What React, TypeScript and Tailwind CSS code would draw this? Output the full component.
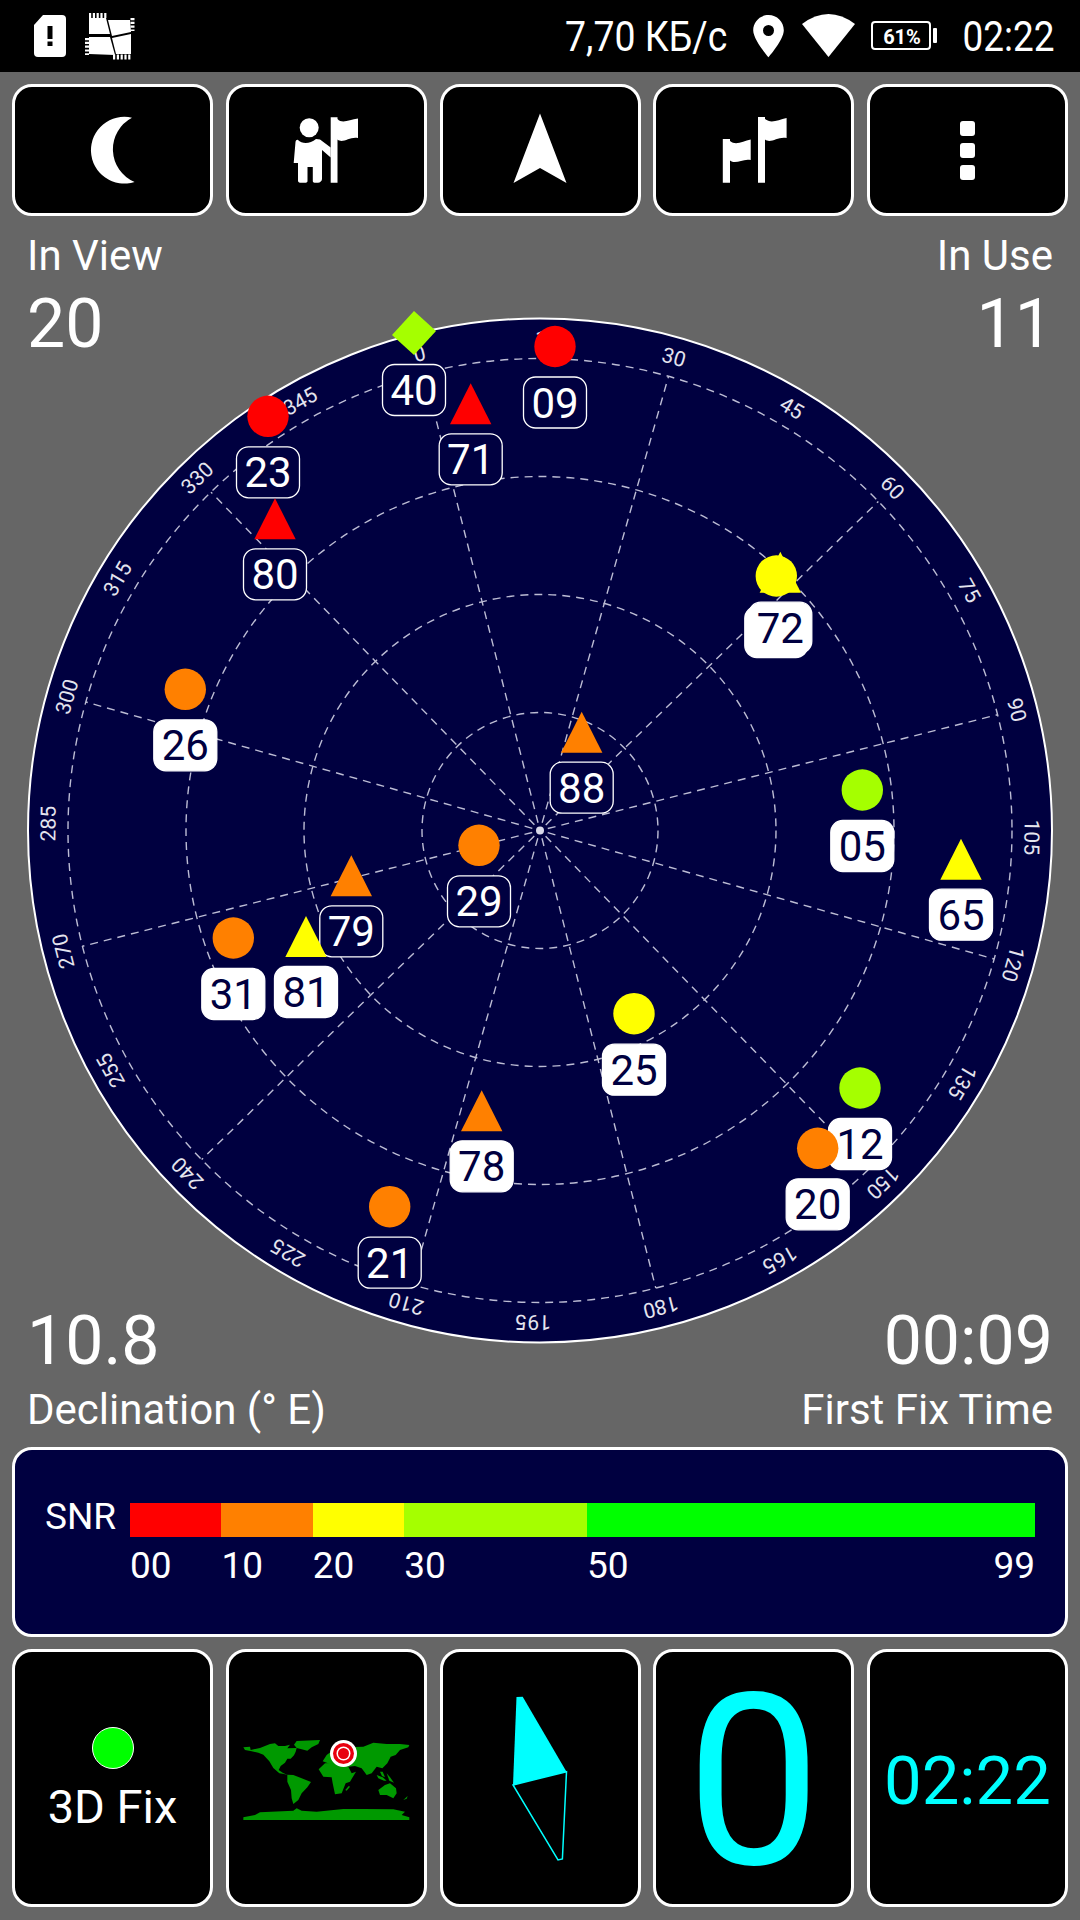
import React from "react";

const NAVY = "#000040";
const CX = 540;
const CY = 830.5;
const ROT = -14.2;

type Sat = {
  n: string;
  x: number;
  y: number;
  shape: "c" | "t" | "d";
  color: string;
  filled: boolean;
  noGlyph?: boolean;
  noPill?: boolean;
  noText?: boolean;
};

const RED = "#ff0000";
const ORANGE = "#ff8000";
const YELLOW = "#ffff00";
const LIME = "#a5ff00";

const sats: Sat[] = [
  { n: "40", x: 414, y: 333, shape: "d", color: LIME, filled: false },
  { n: "09", x: 555, y: 346.5, shape: "c", color: RED, filled: false },
  { n: "71", x: 470.7, y: 383.3, shape: "t", color: RED, filled: false },
  { n: "23", x: 268, y: 416.3, shape: "c", color: RED, filled: false },
  { n: "80", x: 275, y: 498.3, shape: "t", color: RED, filled: false },
  { n: "26", x: 185.3, y: 689.3, shape: "c", color: ORANGE, filled: true },
  { n: "72", x: 780.3, y: 551.7, shape: "t", color: YELLOW, filled: true, noPill: true, noText: true },
  { n: "72", x: 776.3, y: 576, shape: "c", color: YELLOW, filled: true, noText: true },
  { n: "72", x: 780.3, y: 551.7, shape: "t", color: YELLOW, filled: true, noGlyph: true },
  { n: "88", x: 581.7, y: 711.7, shape: "t", color: ORANGE, filled: false },
  { n: "05", x: 862.3, y: 790, shape: "c", color: LIME, filled: true },
  { n: "65", x: 961, y: 838.7, shape: "t", color: YELLOW, filled: true },
  { n: "29", x: 479, y: 845.3, shape: "c", color: ORANGE, filled: false },
  { n: "79", x: 351.3, y: 855.3, shape: "t", color: ORANGE, filled: false },
  { n: "81", x: 306, y: 916, shape: "t", color: YELLOW, filled: true },
  { n: "31", x: 233.3, y: 938, shape: "c", color: ORANGE, filled: true },
  { n: "25", x: 634, y: 1013.7, shape: "c", color: YELLOW, filled: true },
  { n: "78", x: 481.7, y: 1090.3, shape: "t", color: ORANGE, filled: true },
  { n: "12", x: 860, y: 1088, shape: "c", color: LIME, filled: true },
  { n: "20", x: 817.7, y: 1148.3, shape: "c", color: ORANGE, filled: true },
  { n: "21", x: 389.7, y: 1206.7, shape: "c", color: ORANGE, filled: false },
];

function Marker({ s }: { s: Sat }) {
  let pillCenter = s.y + 56;
  let glyph: React.ReactNode = null;
  if (s.shape === "c") {
    glyph = <circle cx={s.x} cy={s.y} r={20.7} fill={s.color} />;
  } else if (s.shape === "t") {
    pillCenter = s.y + 76;
    glyph = <polygon points={`${s.x},${s.y} ${s.x + 20.7},${s.y + 41} ${s.x - 20.7},${s.y + 41}`} fill={s.color} />;
  } else {
    pillCenter = s.y + 57;
    glyph = <polygon points={`${s.x},${s.y - 22} ${s.x + 22},${s.y - 2} ${s.x},${s.y + 22} ${s.x - 22},${s.y + 2}`} fill={s.color} />;
  }
  return (
    <g>
      {!s.noPill && (
        <rect
          x={s.x - 31.5}
          y={pillCenter - 25.5}
          width={63}
          height={51}
          rx={12}
          fill={s.filled ? "#ffffff" : NAVY}
          stroke="#ffffff"
          strokeWidth={1.3}
        />
      )}
      {!s.noText && (
        <text x={s.x} y={pillCenter + 15} textAnchor="middle" fontSize={42} fill={s.filled ? NAVY : "#ffffff"}>
          {s.n}
        </text>
      )}
      {!s.noGlyph && glyph}
    </g>
  );
}

function SkyPlot() {
  const spokes = Array.from({ length: 12 }, (_, i) => i * 30);
  const labels = Array.from({ length: 24 }, (_, i) => i * 15);
  return (
    <svg
      className="col-start-1 row-start-1 mt-[84px] self-start"
      width={1080}
      height={1060}
      viewBox="0 300 1080 1060"
    >
      <circle cx={CX} cy={CY} r={512} fill={NAVY} stroke="#ffffff" strokeWidth={2} />
      {[118, 236, 354, 472].map((r) => (
        <circle key={r} cx={CX} cy={CY} r={r} fill="none" stroke="#bcbcd4" strokeWidth={1.4} strokeDasharray="8 6" />
      ))}
      {spokes.map((a) => {
        const t = ((a + ROT) * Math.PI) / 180;
        return (
          <line
            key={a}
            x1={CX + 8 * Math.sin(t)}
            y1={CY - 8 * Math.cos(t)}
            x2={CX + 472 * Math.sin(t)}
            y2={CY - 472 * Math.cos(t)}
            stroke="#bcbcd4"
            strokeWidth={1.4}
            strokeDasharray="8 6"
          />
        );
      })}
      <circle cx={CX} cy={CY} r={4} fill="#d8d8e8" />
      {labels.map((a) => {
        const deg = a + ROT;
        const t = (deg * Math.PI) / 180;
        const x = CX + 492 * Math.sin(t);
        const y = CY - 492 * Math.cos(t);
        return (
          <text
            key={a}
            x={x}
            y={y + 7.5}
            textAnchor="middle"
            fontSize={21}
            fill="#e4e4ee"
            transform={`rotate(${deg} ${x} ${y})`}
          >
            {a}
          </text>
        );
      })}
      {sats.map((s, i) => (
        <Marker key={i} s={s} />
      ))}
    </svg>
  );
}

function StatusBar() {
  return (
    <div className="flex h-[72px] items-center bg-black text-white">
      <svg width={140} height={72} viewBox="0 0 140 72" className="shrink-0">
        <path d="M43 15H62a4 4 0 0 1 4 4V53a4 4 0 0 1-4 4H38a4 4 0 0 1-4-4V25Z" fill="#fff" />
        <rect x={47.5} y={26} width={5} height={13} fill="#000" />
        <rect x={47.5} y={41.5} width={5} height={4.5} fill="#000" />
        <g fill="#fff">
          <polygon points="89,18 106,18 110,34 89,34" />
          <polygon points="108,20 130,20 131,32 112,36" />
          <polygon points="89,37 110,37 115,55 89,54" />
          <polygon points="112,38 131,34 131,54 116,54" />
        </g>
        <g stroke="#fff" strokeWidth={5} strokeDasharray="2.2 1.6" fill="none">
          <line x1={89} y1={15.5} x2={108} y2={15.5} />
          <line x1={113} y1={57} x2={131} y2={57} />
        </g>
        <g stroke="#fff" strokeWidth={4} strokeDasharray="2.2 1.6" fill="none">
          <line x1={87} y1={38} x2={87} y2={55} />
          <line x1={132.5} y1={18} x2={132.5} y2={31} />
        </g>
      </svg>
      <div className="ml-[-140px] flex w-full items-center justify-end pr-[25px]">
        <span className="flex w-[162px] justify-end pt-[2px]">
          <span className="inline-block shrink-0 origin-right scale-x-[.89] whitespace-nowrap text-[42px] leading-[50px]">
            7,70 КБ/с
          </span>
        </span>
        <svg width={31} height={44} viewBox="754 14 31 44" className="ml-[26px] shrink-0">
          <path fillRule="evenodd" d="M769.5 15c-8.5 0-15.3 6.8-15.3 15.2 0 9.5 15.3 27 15.3 27s15.3-17.5 15.3-27c0-8.4-6.8-15.2-15.3-15.2Zm0 10a5.5 5.5 0 1 1 0 11 5.5 5.5 0 0 1 0-11Z" fill="#fff" />
        </svg>
        <svg width={54} height={44} viewBox="803 14 54 44" className="ml-[18px] shrink-0">
          <path d="M829.5 57L803 24Q829.5 4 856 24Z" fill="#fff" />
        </svg>
        <svg width={67} height={44} viewBox="872 14 67 44" className="ml-[15px] shrink-0">
          <rect x={873} y={22} width={58} height={27} rx={3} fill="none" stroke="#fff" strokeWidth={2} />
          <rect x={934} y={28} width={4} height={15} rx={1} fill="#fff" />
          <text x={903} y={43.5} textAnchor="middle" fontSize={20} fontWeight={700} fill="#fff">
            61%
          </text>
        </svg>
        <span className="ml-[25px] flex w-[92px] justify-end pt-[2px]">
          <span className="inline-block shrink-0 origin-right scale-x-[.88] whitespace-nowrap text-[42px] leading-[50px]">
            02:22
          </span>
        </span>
      </div>
    </div>
  );
}

function Btn({ children }: { children: React.ReactNode }) {
  return (
    <div className="flex h-[132px] w-[201px] items-center justify-center rounded-[20px] border-[3px] border-white bg-black">
      {children}
    </div>
  );
}

function TopButtons() {
  return (
    <div className="mt-3 flex justify-between px-3">
      <Btn>
        <svg width={80} height={80} viewBox="72 110 80 80">
          <path d="M131 117.7A33.4 33.4 0 1 0 133.6 182A35.6 35.6 0 0 1 131 117.7Z" fill="#fff" />
        </svg>
      </Btn>
      <Btn>
        <svg width={80} height={80} viewBox="286 110 80 80">
          <circle cx={309.2} cy={127.7} r={9.5} fill="#fff" />
          <path d="M298 140C302 144 310 144 316 139L320 139.5L330.7 147.5V157.5L322 150V179C322 181 320 182.7 318 182.7H314.5C313.5 182.7 312.8 182 312.8 181V167H307.5V181C307.5 182 306.8 182.7 305.8 182.7H300C298.8 182.7 298 181.8 298 180.5V163H293.7L295.5 142C295.7 140.5 297 139.5 298 140Z" fill="#fff" />
          <path d="M330.7 117.3H337.5V119C342 124 349 120 358 118.5V138C350 136 343 144 337.5 139.5V182.7H330.7Z" fill="#fff" />
        </svg>
      </Btn>
      <Btn>
        <svg width={80} height={80} viewBox="500 110 80 80">
          <polygon points="540,113.5 566.5,183 540,168 513.5,183" fill="#fff" />
        </svg>
      </Btn>
      <Btn>
        <svg width={80} height={80} viewBox="714 110 80 80">
          <path d="M722.8 139H730V141C736 146 743 141 750.7 139.5V160C743 158 736 165 730 160.5V182.7H722.8Z" fill="#fff" />
          <path d="M758 117H765V119C771 124 778 120 786.6 118V138C778 136 771 144 765 139.5V182.7H758Z" fill="#fff" />
        </svg>
      </Btn>
      <Btn>
        <div className="flex flex-col gap-[7px] pt-[1px]">
          <div className="h-[15px] w-[15px] rounded-[3px] bg-white" />
          <div className="h-[15px] w-[15px] rounded-[3px] bg-white" />
          <div className="h-[15px] w-[15px] rounded-[3px] bg-white" />
        </div>
      </Btn>
    </div>
  );
}

function SnrPanel() {
  const grid = "grid grid-cols-[10fr_10fr_10fr_20fr_49fr]";
  return (
    <div className="mx-3 flex h-[190px] items-start rounded-[20px] border-[3px] border-white bg-[#000040] pl-[30px] pr-[30px] pt-[53px] text-white">
      <div className="w-[85px] text-[37px] leading-[28px]">SNR</div>
      <div className="flex-1">
        <div className={`${grid} h-[34px]`}>
          <div className="bg-[#ff0000]" />
          <div className="bg-[#ff8000]" />
          <div className="bg-[#ffff00]" />
          <div className="bg-[#a5ff00]" />
          <div className="bg-[#00ff00]" />
        </div>
        <div className={`${grid} mt-[8px] text-[37px] leading-[42px]`}>
          <div>00</div>
          <div>10</div>
          <div>20</div>
          <div>30</div>
          <div className="flex justify-between">
            <span>50</span>
            <span>99</span>
          </div>
        </div>
      </div>
    </div>
  );
}

function Cell({ children }: { children: React.ReactNode }) {
  return (
    <div className="flex h-[258px] w-[201px] flex-col items-center rounded-[20px] border-[3px] border-white bg-black">
      {children}
    </div>
  );
}

function WorldMap() {
  const land = [
    "40,22 60,20 62,30 90,24 120,12 135,10 145,18 165,18 180,14 172,25 200,24 197,35 192,46 182,56 172,56 165,68 152,78 146,90 158,98 174,106 162,102 148,100 130,84 118,64 100,44 85,38 65,34 45,30",
    "172,104 190,105 215,115 243,126 232,142 215,160 205,180 190,192 185,175 183,150 172,125",
    "192,14 200,3 270,0 265,12 245,22 232,32 215,28 200,24",
    "266,88 285,70 320,68 335,76 355,80 365,100 378,95 360,125 347,130 335,160 315,163 308,130 305,112 280,110",
    "278,64 290,45 310,30 345,22 400,20 430,8 470,12 510,12 538,15 535,22 510,30 497,45 482,50 472,70 457,85 440,80 425,100 410,105 395,85 375,78 355,80 330,72 300,72",
    "445,150 465,135 480,130 498,145 500,160 490,175 470,165 450,165",
    "40,232 75,225 90,217 190,212 200,205 215,212 260,215 340,207 400,207 490,208 525,215 515,225 538,232 538,240 40,240",
    "520,180 533,168 530,176",
    "356,138 360,140 350,152 346,150",
    "440,105 458,112 470,122 462,122 445,115",
    "450,95 458,95 465,112 456,108",
    "470,100 480,112 492,128 478,122",
  ];
  return (
    <svg className="h-full w-full" viewBox="229 1652 195 252">
      <g transform="translate(230 1740) scale(0.33333)">
        {land.map((p, i) => (
          <polygon key={i} points={p} fill="#009900" />
        ))}
      </g>
      <circle cx={343.5} cy={1753.5} r={13.5} fill="#fff" />
      <circle cx={343.5} cy={1753.5} r={10.5} fill="#e8000f" />
      <circle cx={343.5} cy={1753.5} r={7} fill="#fff" />
      <circle cx={343.5} cy={1753.5} r={5.5} fill="#e8000f" />
    </svg>
  );
}

function Compass() {
  return (
    <svg className="h-full w-full" viewBox="443 1652 195 252">
      <polygon points="516.5,1697 522.7,1696.7 566.5,1771.7 513,1785" fill="#00ffff" />
      <polygon points="513,1785 566.5,1771.7 562.4,1859 558,1860" fill="none" stroke="#00ffff" strokeWidth={1.5} />
    </svg>
  );
}

function BottomRow() {
  return (
    <div className="mt-3 flex justify-between px-3">
      <Cell>
        <div className="mt-[75px] h-[42px] w-[42px] rounded-full border border-white bg-[#00ff00]" />
        <div className="mt-[11px] text-[47px] leading-[54px] text-white">3D Fix</div>
      </Cell>
      <Cell>
        <WorldMap />
      </Cell>
      <Cell>
        <Compass />
      </Cell>
      <Cell>
        <div className="flex h-full items-center pt-[8px] text-[240px] leading-none text-[#00ffff]">0</div>
      </Cell>
      <Cell>
        <div className="flex h-full items-center pt-[5px] text-[67px] leading-[80px] text-[#00ffff]">02:22</div>
      </Cell>
    </div>
  );
}

export default function App() {
  return (
    <div className="h-[1920px] w-[1080px] overflow-hidden bg-[#666666] font-['Roboto',sans-serif]">
      <StatusBar />
      <TopButtons />
      <div className="grid h-[1231px] text-white">
        <SkyPlot />
        <div className="col-start-1 row-start-1 flex justify-between self-start px-[27px] pt-[16px]">
          <div>
            <div className="text-[42px] leading-[48px]">In View</div>
            <div className="mt-[4px] text-[68px] leading-[80px]">20</div>
          </div>
          <div className="text-right">
            <div className="text-[42px] leading-[48px]">In Use</div>
            <div className="mt-[4px] text-[68px] leading-[80px]">11</div>
          </div>
        </div>
        <div className="col-start-1 row-start-1 flex justify-between self-end px-[27px] pb-[13px]">
          <div>
            <div className="text-[68px] leading-[80px]">10.8</div>
            <div className="mt-[5px] text-[42px] leading-[48px]">Declination (° E)</div>
          </div>
          <div className="text-right">
            <div className="text-[68px] leading-[80px]">00:09</div>
            <div className="mt-[5px] text-[42px] leading-[48px]">First Fix Time</div>
          </div>
        </div>
      </div>
      <SnrPanel />
      <BottomRow />
    </div>
  );
}
